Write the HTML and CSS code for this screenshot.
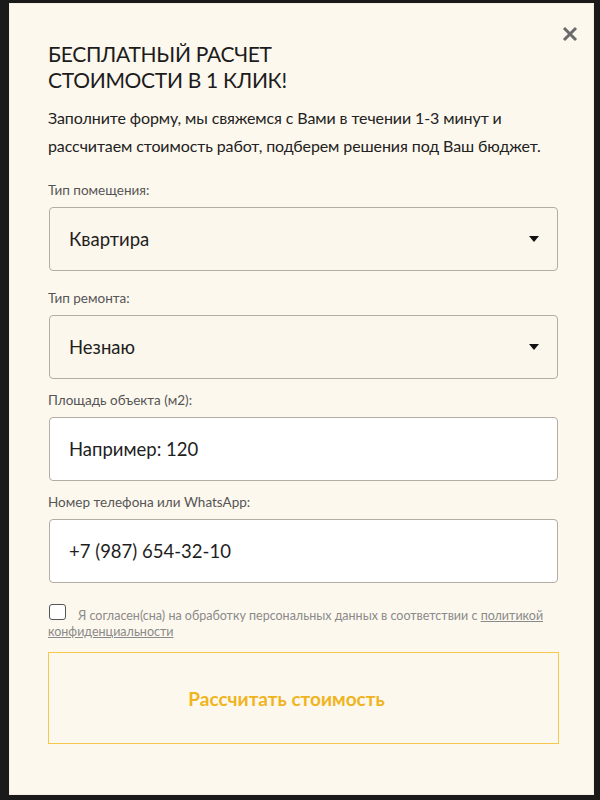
FILE: index.html
```html
<!DOCTYPE html>
<html lang="ru">
<head>
<meta charset="utf-8">
<title>Бесплатный расчет</title>
<link rel="stylesheet" href="styles.css">
</head>
<body>
<div class="page">
  <div class="modal">
    <button class="close" aria-label="Закрыть">
      <svg width="16" height="16" viewBox="0 0 16 16"><path d="M2 2L14 14M14 2L2 14" stroke="#6b6b6b" stroke-width="3" stroke-linecap="butt"/></svg>
    </button>
    <h1 class="title">Бесплатный расчет<br>стоимости в 1 клик!</h1>
    <p class="lead">Заполните форму, мы свяжемся с Вами в течении 1-3 минут и рассчитаем стоимость работ, подберем решения под Ваш бюджет.</p>

    <div class="field field-first">
      <div class="label">Тип помещения:</div>
      <div class="box select"><span>Квартира</span><span class="arrow"></span></div>
    </div>
    <div class="field">
      <div class="label">Тип ремонта:</div>
      <div class="box select"><span>Незнаю</span><span class="arrow"></span></div>
    </div>
    <div class="field field-tight">
      <div class="label">Площадь объекта (м2):</div>
      <div class="box input"><span>Например: 120</span></div>
    </div>
    <div class="field field-tight">
      <div class="label">Номер телефона или WhatsApp:</div>
      <div class="box input"><span>+7 (987) 654-32-10</span></div>
    </div>

    <div class="consent">
      <div class="consent-line"><span class="check"></span>Я согласен(сна) на обработку персональных данных в соответствии с <a href="#" class="link">политикой</a></div>
      <div class="consent-line"><a href="#" class="link">конфиденциальности</a></div>
    </div>

    <button class="submit">Рассчитать стоимость</button>
  </div>
</div>
</body>
</html>
```

FILE: styles.css
```css
html, body {
  margin: 0;
  padding: 0;
}
body {
  background: #1a1a1a;
  width: 600px;
  height: 800px;
  overflow: hidden;
  font-family: Lato, "Liberation Sans", Arial, sans-serif;
}
.page {
  padding: 3px 6px 0 9px;
}
.modal {
  position: relative;
  box-sizing: border-box;
  width: 585px;
  height: 792px;
  background: #fdf8ee;
  border: 1px solid #f4efe6;
  padding: 37px 34px 0 38px;
  color: #1f1f1f;
}
.close {
  position: absolute;
  top: 21px;
  right: 14px;
  width: 18px;
  height: 18px;
  padding: 0;
  border: 0;
  background: transparent;
  display: flex;
  align-items: center;
  justify-content: center;
}
.title {
  margin: 0;
  font-size: 21px;
  line-height: 26px;
  font-weight: 400;
  text-transform: uppercase;
  letter-spacing: -0.3px;
  color: #1c1c1c;
}
.lead {
  margin: 11px 0 0;
  font-size: 16px;
  line-height: 28px;
  letter-spacing: -0.1px;
  color: #222;
}
.field {
  margin-top: 19px;
}
.field-first {
  margin-top: 22px;
}
.field-tight {
  margin-top: 13px;
}
.label {
  font-size: 13.5px;
  line-height: 16px;
  color: #555;
  margin-bottom: 9px;
}
.box {
  box-sizing: border-box;
  height: 64px;
  margin: 0 1px;
  border: 1px solid #b3ada3;
  border-radius: 4px;
  display: flex;
  align-items: center;
  justify-content: space-between;
  padding: 0 18px 0 19px;
  font-size: 18.5px;
  color: #1e1e1e;
}
.select {
  background: #fcf7ec;
}
.input {
  background: #ffffff;
}
.arrow {
  width: 0;
  height: 0;
  border-left: 5px solid transparent;
  border-right: 5px solid transparent;
  border-top: 6px solid #111;
}
.consent {
  margin-top: 21px;
  font-size: 12.5px;
  line-height: 16px;
  color: #8a8a8a;
}
.consent-line {
  white-space: nowrap;
}
.check {
  display: inline-block;
  box-sizing: border-box;
  width: 17px;
  height: 16px;
  border: 1.5px solid #555;
  border-radius: 3px;
  background: #fff;
  margin: 0 12px 0 1px;
  vertical-align: baseline;
}
.link {
  color: #8a8a8a;
  text-decoration: underline;
}
.submit {
  display: block;
  box-sizing: border-box;
  width: 511px;
  height: 92px;
  margin-top: 12px;
  background: transparent;
  border: 1px solid #f2c94c;
  color: #f0b41e;
  font-family: inherit;
  font-size: 19px;
  font-weight: 700;
  padding: 0 34px 0 0;
  text-align: center;
}
```
